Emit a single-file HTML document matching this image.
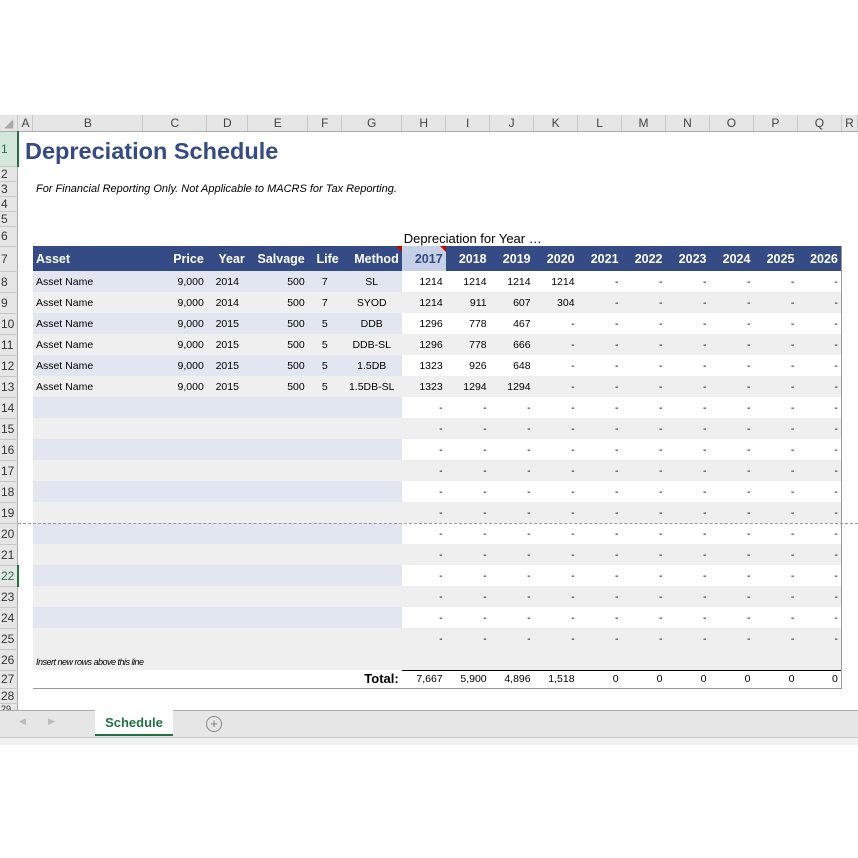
<!DOCTYPE html>
<html><head><meta charset="utf-8"><style>
body{margin:0;width:858px;height:858px;background:#fff;position:relative;overflow:hidden;font-family:"Liberation Sans",Arial,sans-serif;}
table{position:absolute;left:0;top:115px;border-collapse:collapse;table-layout:fixed;}
td{padding:0 3px;font-size:10.5px;white-space:nowrap;overflow:hidden;box-sizing:border-box;}
tr.ch td{height:16px;background:#e6e6e6;color:#444;text-align:center;font-size:12px;border-right:1px solid #c8c8c8;border-bottom:1px solid #ababab;padding:0;}
td.rh{background:#e6e6e6;color:#333;font-size:12px;text-align:left;padding:0 0 0 1px;border-right:1px solid #ababab;border-bottom:1px solid #c8c8c8;}
.r{text-align:right}.c{text-align:center}
tr.hd td.d{background:#344b86;color:#fff;font-weight:bold;font-size:12.5px;}
tr.hd td.h1{background:#c6d0e6;color:#344b86;font-weight:bold;font-size:12.5px;}
.bl td.L{background:#e1e6f0}.bl td.R{background:#fff}
.gr td.L,.gr td.R{background:#efefef}
td.bd{border-right:1px solid #999;}
.tri{position:relative}
.tri:after{content:"";position:absolute;right:0;top:0;border-top:6px solid #c00;border-left:6px solid transparent;}
</style></head><body>
<table>
<colgroup><col style="width:18px"><col style="width:15px"><col style="width:110px"><col style="width:64px"><col style="width:41px"><col style="width:60px"><col style="width:34px"><col style="width:60px"><col style="width:44px"><col style="width:44px"><col style="width:44px"><col style="width:44px"><col style="width:44px"><col style="width:44px"><col style="width:44px"><col style="width:44px"><col style="width:44px"><col style="width:44px"><col style="width:16px"></colgroup>
<tr class="ch"><td style="color:#aaa">◢</td><td>A</td><td>B</td><td>C</td><td>D</td><td>E</td><td>F</td><td>G</td><td>H</td><td>I</td><td>J</td><td>K</td><td>L</td><td>M</td><td>N</td><td>O</td><td>P</td><td>Q</td><td>R</td></tr>
<tr style="height:35px"><td class="rh" style="background:#d3e8da;color:#217346;border-right:2px solid #217346">1</td><td colspan="17" style="font-size:23.5px;font-weight:bold;color:#344b86;padding-left:6px;vertical-align:bottom;padding-bottom:1px;overflow:visible">Depreciation Schedule</td><td></td></tr>
<tr style="height:14px"><td class="rh">2</td><td colspan="18"></td></tr>
<tr style="height:15px"><td class="rh">3</td><td></td><td colspan="16" style="font-style:italic;font-size:11px;padding-left:3px">For Financial Reporting Only. Not Applicable to MACRS for Tax Reporting.</td><td></td></tr>
<tr style="height:14px"><td class="rh">4</td><td colspan="18"></td></tr>
<tr style="height:15px"><td class="rh">5</td><td colspan="18"></td></tr>
<tr style="height:20px"><td class="rh">6</td><td colspan="7"></td><td colspan="5" style="font-size:13px;vertical-align:bottom;padding-left:2px">Depreciation for Year …</td><td colspan="6"></td></tr>
<tr class="hd" style="height:25px"><td class="rh">7</td><td></td><td class="d">Asset</td><td class="d r">Price</td><td class="d r">Year</td><td class="d r">Salvage</td><td class="d r">Life</td><td class="d r tri">Method</td><td class="h1 r tri">2017</td><td class="d r">2018</td><td class="d r">2019</td><td class="d r">2020</td><td class="d r">2021</td><td class="d r">2022</td><td class="d r">2023</td><td class="d r">2024</td><td class="d r">2025</td><td class="d r bd">2026</td><td></td></tr>
<tr class="bl" style="height:21px"><td class="rh">8</td><td></td><td class="L">Asset Name</td><td class="L r">9,000</td><td class="L c">2014</td><td class="L r">500</td><td class="L c">7</td><td class="L c">SL</td><td class="R r">1214</td><td class="R r">1214</td><td class="R r">1214</td><td class="R r">1214</td><td class="R r">-</td><td class="R r">-</td><td class="R r">-</td><td class="R r">-</td><td class="R r">-</td><td class="R r bd">-</td><td></td></tr>
<tr class="gr" style="height:21px"><td class="rh">9</td><td></td><td class="L">Asset Name</td><td class="L r">9,000</td><td class="L c">2014</td><td class="L r">500</td><td class="L c">7</td><td class="L c">SYOD</td><td class="R r">1214</td><td class="R r">911</td><td class="R r">607</td><td class="R r">304</td><td class="R r">-</td><td class="R r">-</td><td class="R r">-</td><td class="R r">-</td><td class="R r">-</td><td class="R r bd">-</td><td></td></tr>
<tr class="bl" style="height:21px"><td class="rh">10</td><td></td><td class="L">Asset Name</td><td class="L r">9,000</td><td class="L c">2015</td><td class="L r">500</td><td class="L c">5</td><td class="L c">DDB</td><td class="R r">1296</td><td class="R r">778</td><td class="R r">467</td><td class="R r">-</td><td class="R r">-</td><td class="R r">-</td><td class="R r">-</td><td class="R r">-</td><td class="R r">-</td><td class="R r bd">-</td><td></td></tr>
<tr class="gr" style="height:21px"><td class="rh">11</td><td></td><td class="L">Asset Name</td><td class="L r">9,000</td><td class="L c">2015</td><td class="L r">500</td><td class="L c">5</td><td class="L c">DDB-SL</td><td class="R r">1296</td><td class="R r">778</td><td class="R r">666</td><td class="R r">-</td><td class="R r">-</td><td class="R r">-</td><td class="R r">-</td><td class="R r">-</td><td class="R r">-</td><td class="R r bd">-</td><td></td></tr>
<tr class="bl" style="height:21px"><td class="rh">12</td><td></td><td class="L">Asset Name</td><td class="L r">9,000</td><td class="L c">2015</td><td class="L r">500</td><td class="L c">5</td><td class="L c">1.5DB</td><td class="R r">1323</td><td class="R r">926</td><td class="R r">648</td><td class="R r">-</td><td class="R r">-</td><td class="R r">-</td><td class="R r">-</td><td class="R r">-</td><td class="R r">-</td><td class="R r bd">-</td><td></td></tr>
<tr class="gr" style="height:21px"><td class="rh">13</td><td></td><td class="L">Asset Name</td><td class="L r">9,000</td><td class="L c">2015</td><td class="L r">500</td><td class="L c">5</td><td class="L c">1.5DB-SL</td><td class="R r">1323</td><td class="R r">1294</td><td class="R r">1294</td><td class="R r">-</td><td class="R r">-</td><td class="R r">-</td><td class="R r">-</td><td class="R r">-</td><td class="R r">-</td><td class="R r bd">-</td><td></td></tr>
<tr class="bl" style="height:21px"><td class="rh">14</td><td></td><td class="L" colspan="6"></td><td class="R r">-</td><td class="R r">-</td><td class="R r">-</td><td class="R r">-</td><td class="R r">-</td><td class="R r">-</td><td class="R r">-</td><td class="R r">-</td><td class="R r">-</td><td class="R r bd">-</td><td></td></tr>
<tr class="gr" style="height:21px"><td class="rh">15</td><td></td><td class="L" colspan="6"></td><td class="R r">-</td><td class="R r">-</td><td class="R r">-</td><td class="R r">-</td><td class="R r">-</td><td class="R r">-</td><td class="R r">-</td><td class="R r">-</td><td class="R r">-</td><td class="R r bd">-</td><td></td></tr>
<tr class="bl" style="height:21px"><td class="rh">16</td><td></td><td class="L" colspan="6"></td><td class="R r">-</td><td class="R r">-</td><td class="R r">-</td><td class="R r">-</td><td class="R r">-</td><td class="R r">-</td><td class="R r">-</td><td class="R r">-</td><td class="R r">-</td><td class="R r bd">-</td><td></td></tr>
<tr class="gr" style="height:21px"><td class="rh">17</td><td></td><td class="L" colspan="6"></td><td class="R r">-</td><td class="R r">-</td><td class="R r">-</td><td class="R r">-</td><td class="R r">-</td><td class="R r">-</td><td class="R r">-</td><td class="R r">-</td><td class="R r">-</td><td class="R r bd">-</td><td></td></tr>
<tr class="bl" style="height:21px"><td class="rh">18</td><td></td><td class="L" colspan="6"></td><td class="R r">-</td><td class="R r">-</td><td class="R r">-</td><td class="R r">-</td><td class="R r">-</td><td class="R r">-</td><td class="R r">-</td><td class="R r">-</td><td class="R r">-</td><td class="R r bd">-</td><td></td></tr>
<tr class="gr" style="height:21px"><td class="rh">19</td><td></td><td class="L" colspan="6"></td><td class="R r">-</td><td class="R r">-</td><td class="R r">-</td><td class="R r">-</td><td class="R r">-</td><td class="R r">-</td><td class="R r">-</td><td class="R r">-</td><td class="R r">-</td><td class="R r bd">-</td><td></td></tr>
<tr class="bl" style="height:21px"><td class="rh">20</td><td></td><td class="L" colspan="6"></td><td class="R r">-</td><td class="R r">-</td><td class="R r">-</td><td class="R r">-</td><td class="R r">-</td><td class="R r">-</td><td class="R r">-</td><td class="R r">-</td><td class="R r">-</td><td class="R r bd">-</td><td></td></tr>
<tr class="gr" style="height:21px"><td class="rh">21</td><td></td><td class="L" colspan="6"></td><td class="R r">-</td><td class="R r">-</td><td class="R r">-</td><td class="R r">-</td><td class="R r">-</td><td class="R r">-</td><td class="R r">-</td><td class="R r">-</td><td class="R r">-</td><td class="R r bd">-</td><td></td></tr>
<tr class="bl" style="height:21px"><td class="rh" style="color:#217346;border-right:2px solid #217346">22</td><td></td><td class="L" colspan="6"></td><td class="R r">-</td><td class="R r">-</td><td class="R r">-</td><td class="R r">-</td><td class="R r">-</td><td class="R r">-</td><td class="R r">-</td><td class="R r">-</td><td class="R r">-</td><td class="R r bd">-</td><td></td></tr>
<tr class="gr" style="height:21px"><td class="rh">23</td><td></td><td class="L" colspan="6"></td><td class="R r">-</td><td class="R r">-</td><td class="R r">-</td><td class="R r">-</td><td class="R r">-</td><td class="R r">-</td><td class="R r">-</td><td class="R r">-</td><td class="R r">-</td><td class="R r bd">-</td><td></td></tr>
<tr class="bl" style="height:21px"><td class="rh">24</td><td></td><td class="L" colspan="6"></td><td class="R r">-</td><td class="R r">-</td><td class="R r">-</td><td class="R r">-</td><td class="R r">-</td><td class="R r">-</td><td class="R r">-</td><td class="R r">-</td><td class="R r">-</td><td class="R r bd">-</td><td></td></tr>
<tr class="gr" style="height:21px"><td class="rh">25</td><td></td><td class="L" colspan="6"></td><td class="R r">-</td><td class="R r">-</td><td class="R r">-</td><td class="R r">-</td><td class="R r">-</td><td class="R r">-</td><td class="R r">-</td><td class="R r">-</td><td class="R r">-</td><td class="R r bd">-</td><td></td></tr>
<tr class="gr" style="height:21px"><td class="rh">26</td><td></td><td class="L" colspan="6" style="font-style:italic;font-size:9px;letter-spacing:-0.5px;vertical-align:bottom;padding-bottom:3px">Insert new rows above this line</td><td class="R" colspan="9"></td><td class="R bd"></td><td></td></tr>
<tr style="height:18px"><td class="rh">27</td><td></td><td colspan="6" class="r" style="font-weight:bold;font-size:13px;border-bottom:1px solid #999">Total:</td><td class="r" style="border-top:1px solid #000;border-bottom:1px solid #999">7,667</td><td class="r" style="border-top:1px solid #000;border-bottom:1px solid #999">5,900</td><td class="r" style="border-top:1px solid #000;border-bottom:1px solid #999">4,896</td><td class="r" style="border-top:1px solid #000;border-bottom:1px solid #999">1,518</td><td class="r" style="border-top:1px solid #000;border-bottom:1px solid #999">0</td><td class="r" style="border-top:1px solid #000;border-bottom:1px solid #999">0</td><td class="r" style="border-top:1px solid #000;border-bottom:1px solid #999">0</td><td class="r" style="border-top:1px solid #000;border-bottom:1px solid #999">0</td><td class="r" style="border-top:1px solid #000;border-bottom:1px solid #999">0</td><td class="r bd" style="border-top:1px solid #000;border-bottom:1px solid #999">0</td><td></td></tr>
<tr style="height:14px"><td class="rh">28</td><td colspan="18"></td></tr>
<tr style="height:8px"><td class="rh" style="font-size:9px;vertical-align:top;overflow:hidden">29</td><td colspan="18"></td></tr>
</table>
<div style="position:absolute;left:18px;top:523px;width:840px;border-top:1px dashed #999"></div>
<div style="position:absolute;left:0;top:710px;width:858px;height:28px;background:#e6e6e6;border-top:1px solid #ababab;border-bottom:1px solid #c8c8c8;box-sizing:border-box"></div>
<div style="position:absolute;left:0;top:738px;width:858px;height:7px;background:#f0f0f0"></div>
<div style="position:absolute;left:19px;top:716px;color:#bbb;font-size:9px">◀</div>
<div style="position:absolute;left:48px;top:716px;color:#bbb;font-size:9px">▶</div>
<div style="position:absolute;left:95px;top:710px;width:78px;height:24px;background:#fff;border-bottom:2px solid #217346;color:#217346;font-weight:bold;font-size:13px;text-align:center;line-height:26px">Schedule</div>
<div style="position:absolute;left:206px;top:716px;width:14px;height:14px;border:1px solid #888;border-radius:50%;color:#777;font-size:13px;line-height:14px;text-align:center">+</div>
</body></html>
